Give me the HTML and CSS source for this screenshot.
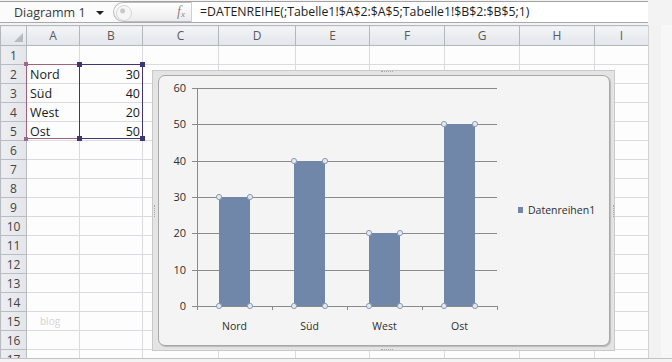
FILE: index.html
```html
<!DOCTYPE html>
<html>

<head>
	<title>Diagramm 1</title>

	<link rel="stylesheet" href="styles.css">

</head>

<body>

	<div id="excel">
		<div class="formelleiste">
			<div class="namenfeld">Diagramm 1<span class="pfeil"></span></div>
			<div class="knopf"><span class="kreis"></span><span class="fx">f<sub>x</sub></span></div>
			<div class="formel">=DATENREIHE(;Tabelle1!$A$2:$A$5;Tabelle1!$B$2:$B$5;1)</div>
		</div>

		<div class="blatt">
			<div class="zellen">
				<table class="tabelle">
					<colgroup>
						<col style="width:26px">
						<col style="width:53px">
						<col style="width:63px">
						<col style="width:76px">
						<col style="width:77px">
						<col style="width:74px">
						<col style="width:75px">
						<col style="width:75px">
						<col style="width:75px">
						<col style="width:54px">
					</colgroup>
					<tr class="kopf">
						<th class="ecke"><span class="dreieck"></span></th>
						<th>A</th><th>B</th><th>C</th><th>D</th><th>E</th><th>F</th><th>G</th><th>H</th><th>I</th>
					</tr>
					<tr><th>1</th><td></td><td></td><td></td><td></td><td></td><td></td><td></td><td></td><td></td></tr>
					<tr><th>2</th><td>Nord</td><td class="zahl">30</td><td></td><td></td><td></td><td></td><td></td><td></td><td></td></tr>
					<tr><th>3</th><td>Süd</td><td class="zahl">40</td><td></td><td></td><td></td><td></td><td></td><td></td><td></td></tr>
					<tr><th>4</th><td>West</td><td class="zahl">20</td><td></td><td></td><td></td><td></td><td></td><td></td><td></td></tr>
					<tr><th>5</th><td>Ost</td><td class="zahl">50</td><td></td><td></td><td></td><td></td><td></td><td></td><td></td></tr>
					<tr><th>6</th><td></td><td></td><td></td><td></td><td></td><td></td><td></td><td></td><td></td></tr>
					<tr><th>7</th><td></td><td></td><td></td><td></td><td></td><td></td><td></td><td></td><td></td></tr>
					<tr><th>8</th><td></td><td></td><td></td><td></td><td></td><td></td><td></td><td></td><td></td></tr>
					<tr><th>9</th><td></td><td></td><td></td><td></td><td></td><td></td><td></td><td></td><td></td></tr>
					<tr><th>10</th><td></td><td></td><td></td><td></td><td></td><td></td><td></td><td></td><td></td></tr>
					<tr><th>11</th><td></td><td></td><td></td><td></td><td></td><td></td><td></td><td></td><td></td></tr>
					<tr><th>12</th><td></td><td></td><td></td><td></td><td></td><td></td><td></td><td></td><td></td></tr>
					<tr><th>13</th><td></td><td></td><td></td><td></td><td></td><td></td><td></td><td></td><td></td></tr>
					<tr><th>14</th><td></td><td></td><td></td><td></td><td></td><td></td><td></td><td></td><td></td></tr>
					<tr><th>15</th><td class="wasserzeichen">blog</td><td></td><td></td><td></td><td></td><td></td><td></td><td></td><td></td></tr>
					<tr><th>16</th><td></td><td></td><td></td><td></td><td></td><td></td><td></td><td></td><td></td></tr>
					<tr><th>17</th><td></td><td></td><td></td><td></td><td></td><td></td><td></td><td></td><td></td></tr>
				</table>

				<!-- markierte Bereiche der Datenreihe -->
				<div class="bereich rubriken">
					<span class="griff lo"></span><span class="griff ro"></span>
					<span class="griff lu"></span><span class="griff ru"></span>
				</div>
				<div class="bereich werte">
					<span class="griff lo"></span><span class="griff ro"></span>
					<span class="griff lu"></span><span class="griff ru"></span>
				</div>

				<div class="diagramm">
					<span class="punkte oben"></span>
					<span class="punkte unten"></span>
					<span class="punkte links"></span>
					<span class="punkte rechts"></span>
					<div class="flaeche">
						<svg class="plot" width="452" height="271" viewBox="158 75 452 271">
							<g class="raster">
								<line x1="197" y1="88.5" x2="497" y2="88.5" />
								<line x1="197" y1="124.5" x2="497" y2="124.5" />
								<line x1="197" y1="161.5" x2="497" y2="161.5" />
								<line x1="197" y1="197.5" x2="497" y2="197.5" />
								<line x1="197" y1="233.5" x2="497" y2="233.5" />
								<line x1="197" y1="270.5" x2="497" y2="270.5" />
								<line x1="192" y1="88.5" x2="197" y2="88.5" />
								<line x1="192" y1="124.5" x2="197" y2="124.5" />
								<line x1="192" y1="161.5" x2="197" y2="161.5" />
								<line x1="192" y1="197.5" x2="197" y2="197.5" />
								<line x1="192" y1="233.5" x2="197" y2="233.5" />
								<line x1="192" y1="270.5" x2="197" y2="270.5" />
								<line x1="192" y1="306.5" x2="497" y2="306.5" />
								<line x1="197.5" y1="88" x2="197.5" y2="310" />
								<line x1="272.5" y1="306" x2="272.5" y2="310" />
								<line x1="347.5" y1="306" x2="347.5" y2="310" />
								<line x1="422.5" y1="306" x2="422.5" y2="310" />
								<line x1="497.5" y1="306" x2="497.5" y2="310" />
							</g>
							<g class="achse-y">
								<text x="186" y="92">60</text>
								<text x="186" y="128">50</text>
								<text x="186" y="165">40</text>
								<text x="186" y="201">30</text>
								<text x="186" y="237">20</text>
								<text x="186" y="274">10</text>
								<text x="186" y="310">0</text>
							</g>
							<g class="balken">
								<rect x="219" y="197" width="31" height="109" />
								<rect x="294" y="161" width="31" height="145" />
								<rect x="369" y="233" width="31" height="73" />
								<rect x="444" y="124" width="31" height="182" />
							</g>
							<g class="punkt">
								<circle cx="219" cy="197" r="2.6" /><circle cx="250" cy="197" r="2.6" />
								<circle cx="219" cy="306" r="2.6" /><circle cx="250" cy="306" r="2.6" />
								<circle cx="294" cy="161" r="2.6" /><circle cx="325" cy="161" r="2.6" />
								<circle cx="294" cy="306" r="2.6" /><circle cx="325" cy="306" r="2.6" />
								<circle cx="369" cy="233" r="2.6" /><circle cx="400" cy="233" r="2.6" />
								<circle cx="369" cy="306" r="2.6" /><circle cx="400" cy="306" r="2.6" />
								<circle cx="444" cy="124" r="2.6" /><circle cx="475" cy="124" r="2.6" />
								<circle cx="444" cy="306" r="2.6" /><circle cx="475" cy="306" r="2.6" />
							</g>
							<g class="achse-x">
								<text x="234.5" y="330">Nord</text>
								<text x="309.5" y="330">Süd</text>
								<text x="384.5" y="330">West</text>
								<text x="459.5" y="330">Ost</text>
							</g>
							<rect class="legende-farbe" x="518" y="207" width="5" height="6" />
							<text class="legende" x="528" y="214">Datenreihen1</text>
						</svg>
					</div>
				</div>
			</div>
			<div class="leiste"></div>
		</div>
	</div>

</body>

</html>
```

FILE: styles.css
```css
* {
	box-sizing: border-box;
}

body {
	margin: 0;
	font-family: "Open Sans", sans-serif;
	background: #f3f3f3;
}

#excel {
	width: 672px;
	height: 362px;
	overflow: hidden;
	background: #f3f3f3;
}

/* Formelleiste */

.formelleiste {
	display: flex;
	width: 648px;
	height: 22px;
	margin-top: 1px;
	margin-bottom: 2px;
	border-top: 1px solid #a2a2a2;
	border-bottom: 1px solid #a9a9a9;
	background: #fbfbfb;
}

.namenfeld {
	display: flex;
	align-items: center;
	justify-content: space-between;
	width: 113px;
	padding: 0 9px 0 14px;
	font-size: 12.5px;
	color: #3a3a3a;
}

.pfeil {
	width: 0;
	height: 0;
	border-left: 4px solid transparent;
	border-right: 4px solid transparent;
	border-top: 4px solid #222;
	margin-top: 1px;
}

.knopf {
	position: relative;
	display: flex;
	align-items: center;
	justify-content: flex-end;
	width: 79px;
	padding-right: 6px;
	border: 1px solid #bdbdbd;
	border-right-color: #cfcfcf;
	border-radius: 11px 0 0 11px;
	background: linear-gradient(#ffffff, #ececec);
}

.kreis {
	position: absolute;
	left: 2px;
	top: 2px;
	width: 16px;
	height: 16px;
	border-radius: 50%;
	border: 1px solid #d8d8d8;
	background: radial-gradient(circle at 40% 35%, #c9c9c9 0 2px, #f6f6f6 3px);
}

.fx {
	font-family: "Liberation Serif", serif;
	font-style: italic;
	font-size: 14px;
	color: #8a8a8a;
	line-height: 1;
}

.fx sub {
	font-size: 9px;
	vertical-align: -1px;
}

.formel {
	flex: 1;
	padding-left: 8px;
	background: #fff;
	font-size: 12.3px;
	line-height: 20px;
	color: #1e1e1e;
	white-space: nowrap;
}

/* Tabellenblatt */

.blatt {
	display: flex;
	height: 334px;
	border-bottom: 1px solid #c2c2c2;
}

.zellen {
	position: relative;
	width: 648px;
	overflow: hidden;
	background: #fdfdfd;
}

.leiste {
	flex: 1;
	border-left: 1px solid #d2d2d2;
	background: linear-gradient(90deg, #f2f2f2 0 12px, #f7f7f7 12px);
}

.tabelle {
	border-collapse: collapse;
	table-layout: fixed;
	width: 648px;
	font-size: 12.5px;
	color: #1a1a1a;
}

.tabelle tr {
	height: 19px;
}

.tabelle tr.kopf {
	height: 20px;
}

.tabelle td {
	padding: 0 0 0 3px;
	border: 1px solid #d9dbde;
	white-space: nowrap;
	line-height: 17px;
}

.tabelle td.zahl {
	text-align: right;
	padding: 0 2px 0 0;
}

.tabelle th {
	padding: 0;
	font-weight: normal;
	font-size: 12px;
	color: #444;
	background: linear-gradient(90deg, #eceef1, #e3e5e9);
	border: 1px solid #b9bdc3;
	line-height: 17px;
}

.tabelle .kopf th {
	color: #5a5a5a;
	background: linear-gradient(#f3f5f7, #e2e5ea);
	border-color: #b3b8bf;
}

.tabelle th.ecke {
	position: relative;
}

.dreieck {
	position: absolute;
	right: 3px;
	bottom: 3px;
	width: 0;
	height: 0;
	border-left: 9px solid transparent;
	border-bottom: 9px solid #b8bcc2;
}

.tabelle td.wasserzeichen {
	padding-left: 13px;
	font-size: 10px;
	color: #d4d4d4;
}

/* Markierung der Quellbereiche */

.bereich {
	position: absolute;
	top: 39px;
	height: 75px;
	border: 1px solid;
}

.rubriken {
	left: 26px;
	width: 54px;
	border-color: #a0607f;
}

.werte {
	left: 79px;
	width: 64px;
	border-color: #3e3575;
}

.griff {
	position: absolute;
	width: 5px;
	height: 5px;
}

.rubriken .griff {
	background: #9c6a88;
	width: 4px;
	height: 4px;
}

.werte .griff {
	background: #3e3575;
}

.lo { left: -3px; top: -3px; }
.ro { right: -3px; top: -3px; }
.lu { left: -3px; bottom: -3px; }
.ru { right: -3px; bottom: -3px; }

/* Diagramm */

.diagramm {
	position: absolute;
	left: 152px;
	top: 45px;
	width: 463px;
	height: 281px;
	padding: 4px 4px 4px 5px;
	border: 1px solid #c9c9c9;
	background: #e4e4e4;
}

.punkte {
	position: absolute;
	border-color: #a9a9a9;
	border-style: dotted;
	border-width: 0;
}

.punkte.oben {
	left: 228px;
	top: 0;
	width: 12px;
	height: 0;
	border-top-width: 1px;
}

.punkte.unten {
	left: 228px;
	bottom: 0;
	width: 12px;
	height: 0;
	border-bottom-width: 1px;
}

.punkte.links {
	left: 1px;
	top: 134px;
	width: 0;
	height: 12px;
	border-left-width: 1px;
}

.punkte.rechts {
	right: 0;
	top: 134px;
	width: 0;
	height: 12px;
	border-right-width: 1px;
}

.flaeche {
	position: relative;
	width: 452px;
	height: 271px;
	border: 1px solid #a7a7a7;
	border-radius: 7px;
	background: #f4f4f4;
	box-shadow: 1px 1px 1px #b8b8b8;
}

.plot {
	position: absolute;
	left: -1px;
	top: -1px;
	display: block;
	font-family: "Open Sans", sans-serif;
}

.raster line {
	stroke: #8a8a8a;
	stroke-width: 1;
}

.achse-y text {
	text-anchor: end;
	font-size: 11px;
	fill: #2e2e2e;
}

.achse-x text {
	text-anchor: middle;
	font-size: 10.5px;
	fill: #2e2e2e;
}

.balken rect,
.legende-farbe {
	fill: #7087a9;
}

.punkt circle {
	fill: #e3e9f0;
	stroke: #8b9cb3;
	stroke-width: 1;
}

.legende {
	font-size: 10.5px;
	fill: #2e2e2e;
}
```
